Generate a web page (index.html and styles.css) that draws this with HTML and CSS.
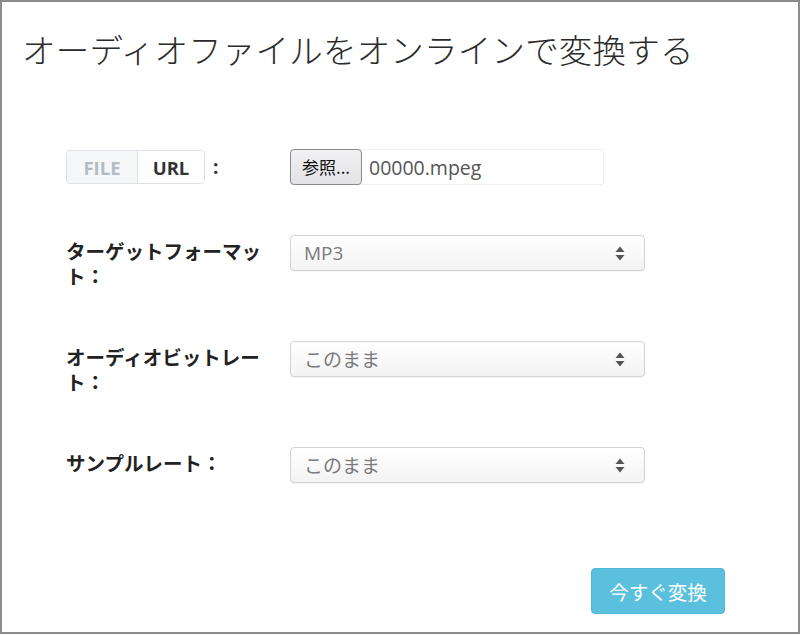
FILE: index.html
```html
<!DOCTYPE html>
<html lang="ja">
<head>
<meta charset="utf-8">
<link rel="stylesheet" href="styles.css">
</head>
<body>
<div class="frame">
  <h1 class="title">オーディオファイルをオンラインで変換する</h1>
  <form class="form">
    <div class="label label-toggle">
      <div class="toggle">
        <span class="toggle-item toggle-off">FILE</span>
        <span class="toggle-item toggle-on">URL</span>
      </div>
      <span class="colon">:</span>
    </div>
    <div class="control">
      <div class="file-input">
        <span class="file-btn">参照...</span>
        <span class="file-name">00000.mpeg</span>
      </div>
    </div>

    <div class="label">ターゲットフォーマット：</div>
    <div class="control">
      <div class="select"><span class="select-text">MP3</span>
        <svg class="arrows" width="10" height="15" viewBox="0 0 10 15"><path d="M5 0.5 L9.5 6 L0.5 6 Z M0.5 9 L9.5 9 L5 14.5 Z" fill="#555"/></svg>
      </div>
    </div>

    <div class="label">オーディオビットレート：</div>
    <div class="control">
      <div class="select"><span class="select-text">このまま</span>
        <svg class="arrows" width="10" height="15" viewBox="0 0 10 15"><path d="M5 0.5 L9.5 6 L0.5 6 Z M0.5 9 L9.5 9 L5 14.5 Z" fill="#555"/></svg>
      </div>
    </div>

    <div class="label">サンプルレート：</div>
    <div class="control">
      <div class="select"><span class="select-text">このまま</span>
        <svg class="arrows" width="10" height="15" viewBox="0 0 10 15"><path d="M5 0.5 L9.5 6 L0.5 6 Z M0.5 9 L9.5 9 L5 14.5 Z" fill="#555"/></svg>
      </div>
    </div>
  </form>
  <div class="actions">
    <button class="convert" type="button">今すぐ変換</button>
  </div>
</div>
</body>
</html>
```
FILE: styles.css
```css
html, body {
  margin: 0;
  padding: 0;
  background: #fff;
}
body {
  font-family: "Open Sans", "Noto Sans CJK JP", sans-serif;
  color: #333;
}
.frame {
  width: 800px;
  height: 634px;
  box-sizing: border-box;
  border: 2px solid #8c8c8c;
  padding: 0;
}
.title {
  margin: 0;
  padding: 27px 0 0 20px;
  font-family: "Noto Sans CJK JP", sans-serif;
  font-weight: 300;
  font-size: 33.5px;
  line-height: 40px;
  color: #2b2b2b;
  letter-spacing: 0.2px;
  white-space: nowrap;
}
.form {
  margin-top: 80px;
  padding-left: 64px;
  display: grid;
  grid-template-columns: 224px 355px;
  row-gap: 50px;
  align-items: start;
}
.label {
  font-family: "Noto Sans CJK JP", sans-serif;
  font-weight: 700;
  font-size: 19.5px;
  line-height: 25px;
  color: #222;
  padding: 3px 14px 3px 0;
}
.label-toggle {
  display: flex;
  align-items: center;
  padding: 1px 0 0 0;
  font-family: "Open Sans", sans-serif;
}
.toggle {
  display: flex;
  height: 34px;
  box-sizing: border-box;
  border: 1px solid #dde1e5;
  border-radius: 4px;
  overflow: hidden;
}
.toggle-item {
  display: flex;
  align-items: center;
  justify-content: center;
  font-weight: 700;
  font-size: 18.5px;
}
.toggle-off {
  width: 70px;
  background: #f4f6f8;
  color: #b3bcc5;
  border-right: 1px solid #dde1e5;
}
.toggle-on {
  width: 66px;
  background: #fff;
  color: #333;
}
.colon {
  margin-left: 8px;
  font-weight: 700;
  font-size: 19px;
  color: #333;
}
.file-input {
  width: 314px;
  height: 36px;
  box-sizing: border-box;
  border: 1px solid #f1f1f1;
  border-radius: 3px;
  display: flex;
  align-items: center;
}
.file-btn {
  width: 72px;
  height: 36px;
  margin: -1px 0 0 -1px;
  box-sizing: border-box;
  border: 1px solid #8a8a8a;
  border-radius: 4px;
  background: linear-gradient(#f0f0f2, #e3e3e6);
  display: flex;
  align-items: center;
  justify-content: center;
  font-family: "Noto Sans CJK JP", sans-serif;
  font-size: 17px;
  color: #111;
}
.file-name {
  margin-left: 7px;
  font-size: 19.5px;
  color: #555;
}
.select {
  width: 355px;
  height: 36px;
  box-sizing: border-box;
  border: 1px solid #d3d3d3;
  border-radius: 4px;
  background: linear-gradient(#ffffff, #f3f3f3);
  box-shadow: 0 1px 1px rgba(0, 0, 0, 0.05);
  display: flex;
  align-items: center;
  justify-content: space-between;
  padding: 0 19px 0 13px;
}
.select-text {
  font-size: 19px;
  color: #7a7a7a;
}
.arrows {
  display: block;
}
.actions {
  margin-top: 85px;
  padding-left: 589px;
}
.convert {
  width: 134px;
  height: 46px;
  border: 1px solid #50b8d8;
  border-radius: 4px;
  background: #5bc0de;
  color: #fff;
  font-family: "Noto Sans CJK JP", sans-serif;
  font-size: 19.5px;
  padding: 0;
  cursor: pointer;
}
```
